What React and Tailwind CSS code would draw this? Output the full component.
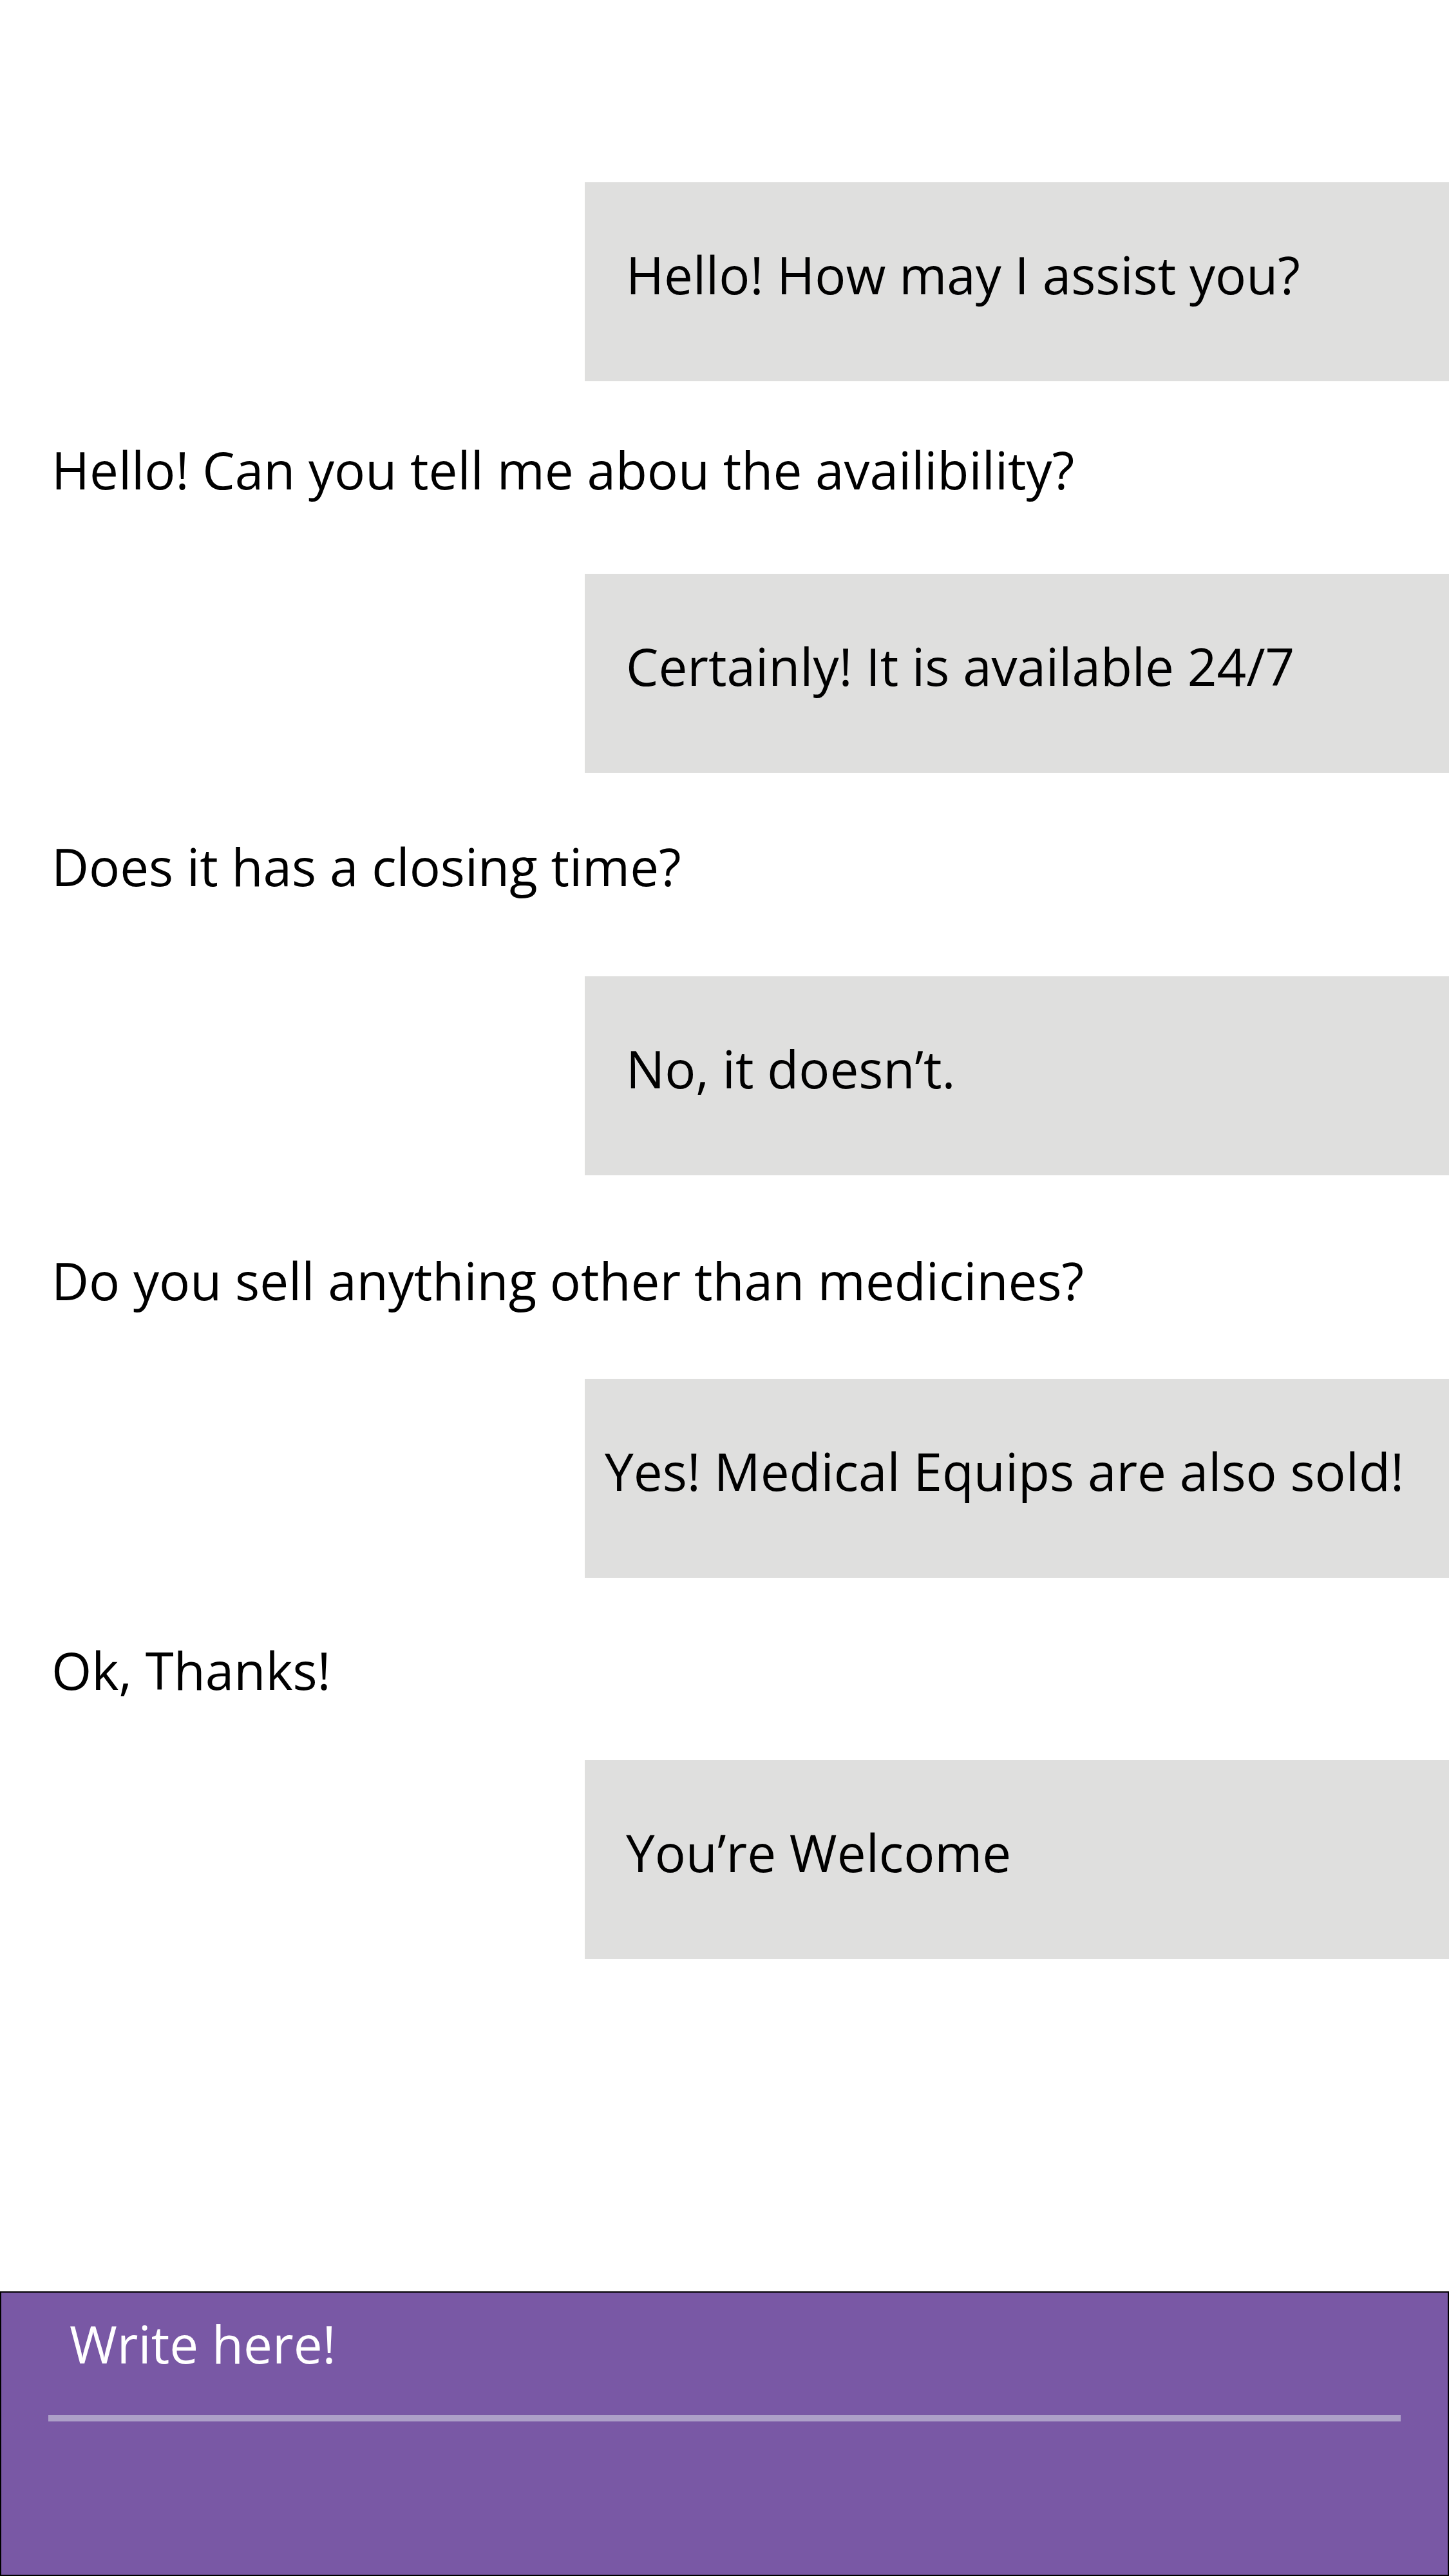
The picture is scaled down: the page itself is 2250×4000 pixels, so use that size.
import React from 'react';

const messages = [
  { from: 'bot', text: 'Hello! How may I assist you?', mt: 'mt-[283px]' },
  { from: 'user', text: 'Hello! Can you tell me abou the availibility?', mt: 'mt-[82px]' },
  { from: 'bot', text: 'Certainly! It is available 24/7', mt: 'mt-[107px]' },
  { from: 'user', text: 'Does it has a closing time?', mt: 'mt-[90px]' },
  { from: 'bot', text: 'No, it doesn’t.', mt: 'mt-[116px]' },
  { from: 'user', text: 'Do you sell anything other than medicines?', mt: 'mt-[108px]' },
  { from: 'bot', text: 'Yes! Medical Equips are also sold!', mt: 'mt-[98px]', tight: true },
  { from: 'user', text: 'Ok, Thanks!', mt: 'mt-[88px]' },
  { from: 'bot', text: 'You’re Welcome', mt: 'mt-[85px]' },
];

const BotBubble = ({ text, mt, tight }) => (
  <div className={`${mt} ml-[908px] bg-[#dfdfde] pt-[88px] pb-[111px] ${tight ? 'pl-[31px]' : 'pl-[64px]'} whitespace-nowrap`}>
    {text}
  </div>
);

const UserLine = ({ text, mt }) => (
  <div className={`${mt} pl-[80px] whitespace-nowrap`}>{text}</div>
);

export default function App() {
  return (
    <div className="flex min-h-[4000px] w-[2250px] flex-col bg-white font-['Open_Sans',sans-serif] text-[80px] leading-[110px] text-black">
      <div className="flex flex-1 flex-col">
        {messages.map((m, i) =>
          m.from === 'bot' ? (
            <BotBubble key={i} text={m.text} mt={m.mt} tight={m.tight} />
          ) : (
            <UserLine key={i} text={m.text} mt={m.mt} />
          )
        )}
      </div>

      <div className="h-[442px] border-2 border-black bg-[#7958a5] px-[73px] pt-[23px]">
        <input
          type="text"
          placeholder="Write here!"
          className="h-[177px] w-full border-b-[10px] border-[#ada0c8] bg-transparent pb-[57px] pl-[33px] text-[80px] leading-[110px] text-white outline-none placeholder:text-white"
        />
      </div>
    </div>
  );
}
